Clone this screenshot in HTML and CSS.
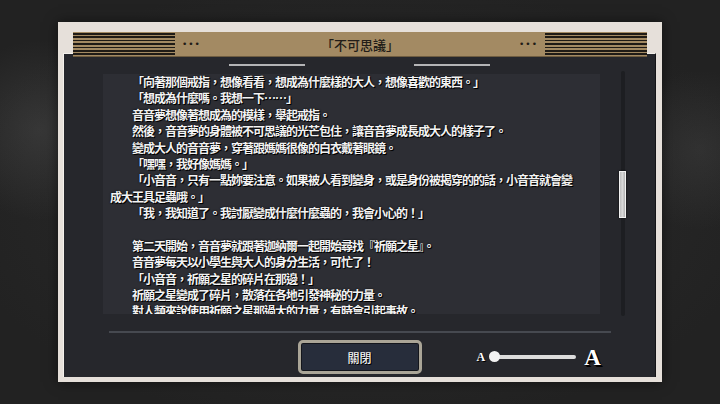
FILE: index.html
```html
<!DOCTYPE html>
<html>
  <head>
    <meta charset="utf-8">
    <title>不可思議</title>
    <link rel="stylesheet" href="styles.css">
  </head>
  <body>
  <div class="frame">
    <div class="title-bar">
      <div class="stripes"></div>
      <div class="dots">&bull;&bull;&bull;</div>
      <div class="title">「不可思議」</div>
      <div class="dots">&bull;&bull;&bull;</div>
      <div class="stripes"></div>
    </div>
    <div class="panel">
      <div class="top-rule">
        <span class="rule"></span>
        <span class="rule"></span>
      </div>
      <div class="story-row">
        <div class="story">
          <div class="line indent">「向著那個戒指，想像看看，想成為什麼樣的大人，想像喜歡的東西。」</div>
          <div class="line indent">「想成為什麼嗎。我想一下……」</div>
          <div class="line indent">音音夢想像著想成為的模樣，舉起戒指。</div>
          <div class="line indent">然後，音音夢的身體被不可思議的光芒包住，讓音音夢成長成大人的樣子了。</div>
          <div class="line indent">變成大人的音音夢，穿著跟媽媽很像的白衣戴著眼鏡。</div>
          <div class="line indent">「嘿嘿，我好像媽媽。」</div>
          <div class="line indent">「小音音，只有一點妳要注意。如果被人看到變身，或是身份被揭穿的的話，小音音就會變</div>
          <div class="line">成大王具足蟲哦。」</div>
          <div class="line indent">「我，我知道了。我討厭變成什麼什麼蟲的，我會小心的！」</div>
          <div class="line">&nbsp;</div>
          <div class="line indent">第二天開始，音音夢就跟著迦納爾一起開始尋找『祈願之星』。</div>
          <div class="line indent">音音夢每天以小學生與大人的身分生活，可忙了！</div>
          <div class="line indent">「小音音，祈願之星的碎片在那邊！」</div>
          <div class="line indent">祈願之星變成了碎片，散落在各地引發神秘的力量。</div>
          <div class="line indent">對人類來說使用祈願之星那過大的力量，有時會引起事故。</div>
        </div>
        <div class="scrollbar">
          <div class="thumb"></div>
        </div>
      </div>
      <div class="bottom-rule"></div>
      <div class="footer">
        <div></div>
        <button class="btn">關閉</button>
        <div class="size-slider">
          <span class="a-small">A</span>
          <span class="track"><span class="knob"></span></span>
          <span class="a-big">A</span>
        </div>
      </div>
    </div>
  </div>
  </body>
</html>
```

FILE: styles.css
```css
html, body {
    margin: 0;
    padding: 0;
}
body {
    width: 720px;
    height: 404px;
    overflow: hidden;
    background-color: #262626;
    background-image:
        radial-gradient(circle at 40px 130px, rgba(90, 90, 90, 0.35), transparent 90px),
        radial-gradient(circle at 700px 150px, rgba(80, 80, 80, 0.3), transparent 80px),
        radial-gradient(ellipse at 50% 50%, #2e2e2e, #222 80%);
    font-family: "Noto Sans CJK TC", "Noto Sans", sans-serif;
}

.frame {
    box-sizing: border-box;
    width: 604px;
    height: 360px;
    margin: 22px 0 0 58px;
    padding: 10px 6px 5px 5px;
    background-color: #e6e0da;
    box-shadow: 0 0 12px rgba(0, 0, 0, 0.5);
}

/* header */
.title-bar {
    position: relative;
    z-index: 1;
    display: flex;
    align-items: center;
    height: 25px;
    margin: 0 9px 0 10px;
    background-color: #a38a63;
    border-bottom: 1px solid #6e5c40;
    box-sizing: border-box;
}
.stripes {
    width: 102px;
    height: 100%;
    background-image: repeating-linear-gradient(to bottom, transparent 0, transparent 1px, #1f1b16 1px, #1f1b16 2.6px, transparent 2.6px, transparent 3.4px);
}
.dots {
    margin: 0 7px;
    font-size: 9px;
    letter-spacing: 1px;
    color: #1f1b16;
    font-family: "DejaVu Sans", sans-serif;
}
.title {
    flex: 1;
    text-align: center;
    font-size: 13px;
    font-weight: 500;
    color: #221d18;
    font-family: "Noto Sans CJK TC", serif;
}

/* dark panel */
.panel {
    box-sizing: border-box;
    height: 324px;
    margin-top: -4px;
    padding-top: 10px;
    background-color: #26272c;
    border-top: 1px solid #f4f1ec;
    border-left: 1px solid #f4f1ec;
    border-right: 1px solid #141417;
}
.top-rule {
    display: flex;
    justify-content: center;
    gap: 109px;
    height: 2px;
}
.rule {
    width: 76px;
    height: 2px;
    background-color: #b4b4b6;
}

.story-row {
    display: flex;
    margin-top: 8px;
    padding-left: 39px;
}
.story {
    box-sizing: border-box;
    width: 497px;
    height: 240px;
    padding: 0 0 0 7px;
    overflow: hidden;
    background-color: #2d2e34;
}
.line {
    height: 16.4px;
    line-height: 16.4px;
    white-space: nowrap;
    color: #f3f3f3;
    font-size: 12px;
    font-weight: 700;
    letter-spacing: -1px;
    text-shadow: 1px 1px 0 #000, 0 0 2px #000;
}
.indent {
    padding-left: 22px;
}

.scrollbar {
    position: relative;
    width: 4px;
    height: 245px;
    margin: -3px 0 0 21px;
    background-color: #1d1e22;
    border-radius: 2px;
}
.thumb {
    position: absolute;
    left: -2px;
    top: 100px;
    width: 5px;
    height: 45px;
    border: 1px solid #f1f1f1;
    background: linear-gradient(to right, #bdbdbd, #d8d8d8, #b0b0b0);
    box-shadow: 0 0 2px #000;
}

.bottom-rule {
    width: 502px;
    height: 2px;
    margin: 15px 0 0 45px;
    background-color: #464950;
}

.footer {
    display: grid;
    grid-template-columns: 1fr auto 1fr;
    align-items: center;
    margin-top: 7px;
}
.btn {
    box-sizing: border-box;
    width: 124px;
    height: 34px;
    padding: 0;
    border: 3px solid #aaa597;
    border-radius: 5px;
    background-color: #272d3b;
    box-shadow: inset 0 0 0 1px #14161c;
    color: #f0f0f0;
    font-family: "Noto Sans CJK TC", sans-serif;
    font-size: 12px;
    font-weight: 500;
    text-shadow: 1px 1px 0 #000;
}

.size-slider {
    display: flex;
    align-items: center;
    margin-left: 55px;
    font-family: "Liberation Serif", serif;
    font-weight: 700;
    color: #fff;
}
.a-small {
    font-size: 12px;
    text-shadow: 1px 1px 0 #000;
}
.track {
    position: relative;
    width: 83px;
    height: 4px;
    margin: 0 8px 0 8px;
    border-radius: 2px;
    background-color: #dcdcdc;
}
.knob {
    position: absolute;
    left: -4px;
    top: -4px;
    width: 11px;
    height: 11px;
    border-radius: 50%;
    background-color: #f2f2f2;
}
.a-big {
    font-size: 23px;
    line-height: 1;
    text-shadow: 1px 1px 0 #000, 2px 2px 0 #000;
}
```
